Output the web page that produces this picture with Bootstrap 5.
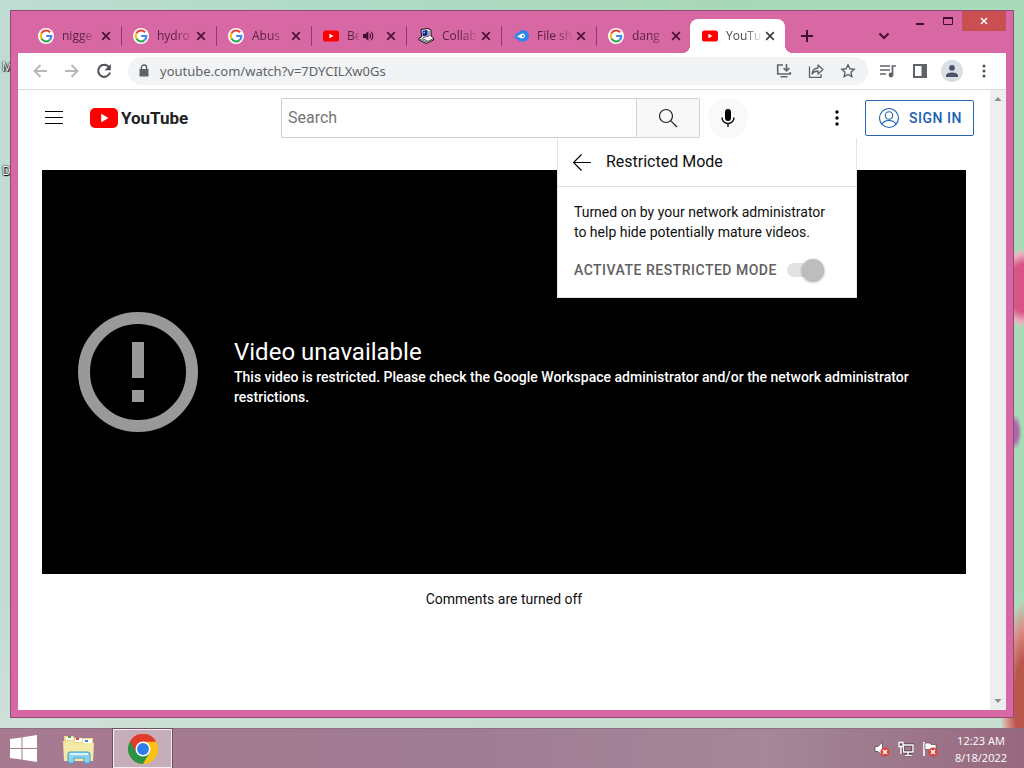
<!DOCTYPE html>
<html lang="en">
<head>
<meta charset="utf-8">
<meta name="viewport" content="width=device-width, initial-scale=1">
<title>YouTube</title>
<link href="https://cdn.jsdelivr.net/npm/bootstrap@5.3.0/dist/css/bootstrap.min.css" rel="stylesheet">
<style>
  body { font-family: Roboto, "Liberation Sans", sans-serif; font-size: 14px; line-height: 20px; color: #0f0f0f; }
  svg { display: block; flex: none; }
  button { border: 0; background: none; padding: 0; color: inherit; }

  /* desktop */
  .desktop {
    padding: 10px;
    background:
      radial-gradient(ellipse 26px 40px at 100% 288px, #d95586 60%, #e9b0c0 85%, transparent),
      radial-gradient(ellipse 8px 18px at 1014px 432px, #a86aa8 50%, transparent),
      radial-gradient(ellipse 24px 100px at 100% 700px, #b9574c 40%, #d98c86 70%, transparent),
      linear-gradient(0deg, rgba(214, 226, 220, .7), rgba(214, 226, 220, 0) 140px),
      linear-gradient(90deg, #bfdcd2 0, #b0dac8 30%, #a9d8b8 70%, #a9dbb9 100%);
  }
  .desktop-label { position: absolute; left: 2px; font: 12px "Open Sans", sans-serif; color: #fff; text-shadow: 0 0 1px #000, 0 0 2px #000, 1px 1px 1px #000; }
  .window { position: relative; background: #d868a3; border: 1px solid #8f4a78; padding: 0 7px 7px; min-height: 0; }

  /* tab strip */
  .tabstrip { height: 42px; padding-left: 8px; font: 12px/16px "Open Sans", sans-serif; color: #5a2149; }
  .tab { position: relative; width: 95px; height: 34px; padding: 0 10px 0 12px; }
  .tab + .tab:not(.active)::before { content: ""; position: absolute; left: 0; top: 7px; height: 20px; border-left: 1px solid #8a3a6c; }
  .tab.active { background: #fff; border-radius: 8px 8px 0 0; color: #45474a; margin-left: -1px; }
  .tab.active::before, .tab.active::after { content: ""; position: absolute; bottom: 0; width: 8px; height: 8px; }
  .tab.active::before { left: -8px; background: radial-gradient(circle at 0 0, transparent 8px, #fff 8px); }
  .tab.active::after { right: -8px; background: radial-gradient(circle at 100% 0, transparent 8px, #fff 8px); }
  .tab-text { flex: 1 1 0; min-width: 0; white-space: nowrap; margin: 0 2px 0 8px; -webkit-mask-image: linear-gradient(90deg, #000 50%, transparent); mask-image: linear-gradient(90deg, #000 50%, transparent); }
  .tab-close { color: #4a1238; }
  .active .tab-close { color: #3c4043; }
  .strip-btn { width: 28px; height: 34px; color: #3f1032; }
  .win-btn { width: 28px; height: 20px; color: #3f1032; }
  .win-close { width: 44px; background: #c94f50; color: #fff; }

  /* toolbar */
  .toolbar { height: 37px; background: #fff; border-bottom: 1px solid #dadce0; padding: 0 6px; color: #5f6368; }
  .tool-btn { width: 32px; height: 32px; }
  .omnibox { height: 28px; margin-left: 8px; border-radius: 14px; background: #f1f3f4; padding: 0 4px 0 8px; min-width: 0; }
  .url-input { font: 13px/20px "Noto Sans", sans-serif; color: #5f6368; border: 0; background: none; outline: 0; min-width: 0; padding: 0; }
  .avatar { width: 22px; height: 22px; border-radius: 50%; background: #dadfe6; color: #4a5568; }

  /* page */
  .viewport { background: #fff; min-height: 0; }
  .scrollbar-y { width: 17px; background: #ecefee; padding: 6px 0; color: #8c8f92; }
  .masthead { height: 56px; padding: 0 16px 0 24px; }
  .wordmark { font: bold 17px/24px Roboto, sans-serif; color: #212121; }
  .brand-link { width: 90px; margin-left: 24px; gap: 3px; }
  .search { width: 419px; margin-left: 101px; height: 40px; }
  .search-box { border: 1px solid #ccc; border-right: 0; border-radius: 2px 0 0 2px; padding: 0 6px; font: 16px/24px Roboto, sans-serif; outline: 0; min-width: 0; }
  .search-box::placeholder { color: #757575; opacity: 1; }
  .search-btn { width: 64px; border: 1px solid #d3d3d3; border-radius: 0 2px 2px 0; background: #f8f8f8; }
  .round-btn { width: 40px; height: 40px; border-radius: 50%; }
  .mic-btn { background: #f9f9f9; margin-left: 8px; }
  .sign-in { border: 1px solid #2a66b0; border-radius: 2px; color: #1a5fb4; height: 36px; width: 109px; margin-left: 8px; padding: 0; font-size: 14px; font-weight: 500; letter-spacing: .5px; gap: 8px; white-space: nowrap; }
  .popup { position: absolute; top: 100%; right: 0; width: 300px; background: #fff; border: 1px solid #e5e5e5; border-top: 0; z-index: 5; height: 160px; }
  .popup-head { height: 49px; padding: 0 15px; gap: 15px; border-bottom: 1px solid #e0e0e0; font-size: 16px; }
  .popup-body { padding: 15px 16px; }
  .popup-note { margin-bottom: 18px; }
  .mode-label { font-weight: 500; color: #606060; letter-spacing: .5px; white-space: nowrap; }
  .mode-switch { appearance: none; position: relative; width: 36px; height: 14px; border-radius: 7px; background: #e2e2e2; margin: 0 0 0 10px; }
  .mode-switch::before { content: ""; position: absolute; right: -1px; top: -4px; width: 22px; height: 22px; border-radius: 50%; background: #bdbdbd; box-shadow: 0 1px 3px rgba(0,0,0,.4); }
  .player { margin: 24px 24px 0; height: 404px; background: #000; color: #fff; padding: 0 36px; gap: 36px; }
  .player-title { font-size: 24px; line-height: 30px; font-weight: 400; }
  .player-note { font-weight: 500; }
  .comments { margin: 15px 24px 0; }

  /* taskbar */
  .taskbar { height: 40px; border-top: 1px solid #8d7083; background: linear-gradient(90deg, #a77a90, #a07c93 45%, #a48799 75%, #97687e); padding: 0 14px 0 10px; }
  .task-active { width: 59px; height: 39px; border: 1px solid #f4edf1; background: #c6adb9; margin-left: 16px; outline: 1px solid #6d5060; }
  .clock { font: 11px/17px "Open Sans", sans-serif; color: #fff; width: 58px; margin-left: 14px; }
</style>
</head>
<body class="vh-100 d-flex flex-column overflow-hidden">

<svg width="0" height="0" class="position-absolute" aria-hidden="true">
  <symbol id="g" viewBox="0 0 16 16"><circle cx="8" cy="8" r="8" fill="#fff"/><g fill="none" stroke-width="2.1"><path d="M12.1 4.2A5.3 5.3 0 0 0 3.4 5.4" stroke="#ea4335"/><path d="M3.4 5.4a5.3 5.3 0 0 0 0 5.2" stroke="#fbbc05"/><path d="M3.4 10.6a5.3 5.3 0 0 0 8.2 1.5" stroke="#34a853"/><path d="M11.6 12.1A5.3 5.3 0 0 0 13.3 8H8.2" stroke="#4285f4"/></g></symbol>
  <symbol id="yt" viewBox="0 0 16 16"><rect y="2.5" width="16" height="11" rx="2.6" fill="#f00"/><path d="M6.4 5.7v4.6L10.5 8z" fill="#fff"/></symbol>
  <symbol id="x" viewBox="0 0 10 10"><path d="M1.2 1.2l7.6 7.6M8.8 1.2L1.2 8.800" stroke="currentColor" stroke-width="1.700"/></symbol>
</svg>

<main class="desktop flex-grow-1 position-relative d-flex flex-column">
  <span class="desktop-label" style="top:58px">M</span>
  <span class="desktop-label" style="top:162px">D</span>

  <div class="window flex-grow-1 d-flex flex-column">
    <div class="tabstrip d-flex align-items-end">
      <div class="tab d-flex align-items-center"><svg width="16" height="16"><use href="#g"/></svg><span class="tab-text">nigge</span><button class="tab-close" aria-label="Close tab"><svg width="10" height="10"><use href="#x"/></svg></button></div>
      <div class="tab d-flex align-items-center"><svg width="16" height="16"><use href="#g"/></svg><span class="tab-text">hydro</span><button class="tab-close" aria-label="Close tab"><svg width="10" height="10"><use href="#x"/></svg></button></div>
      <div class="tab d-flex align-items-center"><svg width="16" height="16"><use href="#g"/></svg><span class="tab-text">Abus</span><button class="tab-close" aria-label="Close tab"><svg width="10" height="10"><use href="#x"/></svg></button></div>
      <div class="tab d-flex align-items-center"><svg width="16" height="16"><use href="#yt"/></svg><span class="tab-text">Be</span>
        <svg width="12" height="12" viewBox="0 0 12 12" class="me-2"><path d="M1 4v4h2.300L6.400 11V1L3.300 4z" fill="#3f1032"/><path d="M7.700 3.800q1.600 2.200 0 4.400M9.300 2q3 4 0 8" fill="none" stroke="#3f1032" stroke-width="1.100"/></svg>
        <button class="tab-close ms-1" aria-label="Close tab"><svg width="10" height="10"><use href="#x"/></svg></button></div>
      <div class="tab d-flex align-items-center">
        <svg width="16" height="16" viewBox="0 0 16 16"><path d="M3 1.500L10 .5l3 1.500v6l2.500 2v2L8 15.500 1 12v-2l2.500-1z" fill="#f4f4f6" stroke="#111" stroke-width="1"/><path d="M4.500 2.800L9.500 2v5.500l-5 .7z" fill="#12228c"/><path d="M5.500 3.800h1.500v1.500H5.500z" fill="#9fd0ff"/><path d="M11 3v5l-6 1.500M2 11l6 3 7-3M4 10.500l5 2.200" stroke="#333" stroke-width=".8" fill="none"/></svg>
        <span class="tab-text">Collab</span><button class="tab-close" aria-label="Close tab"><svg width="10" height="10"><use href="#x"/></svg></button></div>
      <div class="tab d-flex align-items-center">
        <svg width="16" height="16" viewBox="0 0 16 16"><path d="M0 9l3-1-1-2 4-2q3-3 6.500-1.500Q16 4 16 8q0 5-5 5.500Q6 14 3.500 11z" fill="#2f86ec"/><path d="M4 8.500L8 6q3-1.300 4 1.500 0 3-4 2.800z" fill="#fff"/><circle cx="10" cy="8" r="1" fill="#2f86ec"/></svg>
        <span class="tab-text">File sh</span><button class="tab-close" aria-label="Close tab"><svg width="10" height="10"><use href="#x"/></svg></button></div>
      <div class="tab d-flex align-items-center"><svg width="16" height="16"><use href="#g"/></svg><span class="tab-text">dang</span><button class="tab-close" aria-label="Close tab"><svg width="10" height="10"><use href="#x"/></svg></button></div>
      <div class="tab active d-flex align-items-center"><svg width="16" height="16"><use href="#yt"/></svg><span class="tab-text">YouTu</span><button class="tab-close" aria-label="Close tab"><svg width="10" height="10"><use href="#x"/></svg></button></div>
      <button class="strip-btn ms-2 d-flex align-items-center justify-content-center" aria-label="New tab"><svg width="12" height="12"><path d="M6 0v12M0 6h12" stroke="currentColor" stroke-width="2"/></svg></button>
      <button class="strip-btn ms-auto me-2 d-flex align-items-center justify-content-center" aria-label="Search tabs"><svg width="12" height="8"><path d="M1.500 1.500L6 6l4.500-4.500" fill="none" stroke="currentColor" stroke-width="2"/></svg></button>
      <div class="d-flex align-self-start">
        <button class="win-btn d-flex align-items-center justify-content-center" aria-label="Minimize"><svg width="10" height="10"><path d="M1 8h8" stroke="currentColor" stroke-width="2"/></svg></button>
        <button class="win-btn d-flex align-items-center justify-content-center" aria-label="Maximize"><svg width="10" height="10"><path d="M.5 1.500h9v7h-9z" fill="none" stroke="currentColor"/><path d="M0 2h10" stroke="currentColor" stroke-width="2"/></svg></button>
        <button class="win-btn win-close d-flex align-items-center justify-content-center" aria-label="Close"><svg width="8" height="8" viewBox="0 0 10 10"><use href="#x"/></svg></button>
      </div>
    </div>

    <div class="toolbar d-flex align-items-center">
      <button class="tool-btn d-flex align-items-center justify-content-center" aria-label="Back"><svg width="14" height="14"><path d="M14 7H1.500M7.500 1L1.500 7l6 6" fill="none" stroke="#b4b6b9" stroke-width="1.800"/></svg></button>
      <button class="tool-btn d-flex align-items-center justify-content-center" aria-label="Forward"><svg width="14" height="14"><path d="M0 7h12.500M6.500 1l6 6-6 6" fill="none" stroke="#b4b6b9" stroke-width="1.800"/></svg></button>
      <button class="tool-btn d-flex align-items-center justify-content-center" aria-label="Reload"><svg width="16" height="16"><path d="M13 4.200A6 6 0 1 0 14 9.500" fill="none" stroke="#4d5156" stroke-width="2"/><path d="M14.800 1v6.200H8.600z" fill="#4d5156"/></svg></button>
      <div class="omnibox flex-grow-1 d-flex align-items-center">
        <svg width="16" height="16"><path d="M3.500 6h9v7.500h-9z" fill="#5f6368"/><path d="M5.400 6.500V4.600a2.600 2.600 0 0 1 5.200 0v1.900" fill="none" stroke="#5f6368" stroke-width="1.400"/></svg>
        <input class="url-input flex-grow-1 ms-2" type="text" aria-label="Address" value="youtube.com/watch?v=7DYCILXw0Gs">
        <button class="tool-btn d-flex align-items-center justify-content-center" aria-label="Install"><svg width="16" height="16"><path d="M7 2H1.700v9h12.600V9M4.500 13.800h7M10.500 1v6.500M7.600 5l2.900 2.900L13.400 5" fill="none" stroke="currentColor" stroke-width="1.600"/></svg></button>
        <button class="tool-btn d-flex align-items-center justify-content-center" aria-label="Share"><svg width="16" height="16"><path d="M1.500 3.500v10.800H13V11" fill="none" stroke="currentColor" stroke-width="1.300"/><path d="M4 11q.5-5.500 6-6V2l5 4.500-5 4.500V8Q6 8 4 11z" fill="none" stroke="currentColor" stroke-width="1.300" stroke-linejoin="round"/></svg></button>
        <button class="tool-btn d-flex align-items-center justify-content-center" aria-label="Bookmark"><svg width="16" height="16"><path d="M8 1.800l1.900 4 4.300.5-3.200 3 .9 4.400L8 11.500l-3.900 2.200.9-4.400-3.200-3 4.300-.5z" fill="none" stroke="currentColor" stroke-width="1.400"/></svg></button>
      </div>
      <button class="tool-btn ms-1 d-flex align-items-center justify-content-center" aria-label="Media"><svg width="16" height="14"><path d="M0 2h10M0 6h10M0 10h6M12.500 11V2H16" fill="none" stroke="currentColor" stroke-width="1.700"/><circle cx="11" cy="11" r="2.400" fill="currentColor"/></svg></button>
      <button class="tool-btn d-flex align-items-center justify-content-center" aria-label="Side panel"><svg width="14" height="14"><path d="M1 1h12v12H1z" fill="none" stroke="currentColor" stroke-width="2"/><path d="M8.500 1H13v12H8.500z" fill="currentColor"/></svg></button>
      <button class="tool-btn d-flex align-items-center justify-content-center" aria-label="Profile"><span class="avatar d-flex align-items-center justify-content-center"><svg width="14" height="14"><circle cx="7" cy="3.800" r="2.900" fill="currentColor"/><path d="M1 13v-1.500Q1.500 8.500 7 8.500t6 3V13z" fill="currentColor"/></svg></span></button>
      <button class="tool-btn d-flex align-items-center justify-content-center" aria-label="Chrome menu"><svg width="4" height="14" fill="#4d5156"><circle cx="2" cy="2" r="1.500"/><circle cx="2" cy="7" r="1.500"/><circle cx="2" cy="12" r="1.500"/></svg></button>
    </div>

    <div class="viewport flex-grow-1 d-flex">
      <div class="flex-grow-1">
        <header class="masthead d-flex align-items-center">
          <button aria-label="Guide"><svg width="24" height="24"><path d="M3 5.500h18M3 11.500h18M3 17.500h18" stroke="#030303"/></svg></button>
          <a href="#" class="brand-link d-flex align-items-center text-decoration-none" aria-label="YouTube home">
            <svg width="28" height="20"><rect width="28" height="20" rx="5" fill="#f00"/><path d="M11.200 5.700v8.600l7.300-4.300z" fill="#fff"/></svg>
            <span class="wordmark">YouTube</span>
          </a>
          <form class="search d-flex">
            <input class="search-box flex-grow-1" type="text" placeholder="Search" aria-label="Search">
            <button class="search-btn d-flex align-items-center justify-content-center" type="button" aria-label="Search"><svg width="20" height="20" fill="none" stroke="#222" stroke-width="1.200"><circle cx="8" cy="8" r="6.500"/><path d="M12.700 12.700L19 19"/></svg></button>
          </form>
          <button class="round-btn mic-btn d-flex align-items-center justify-content-center" aria-label="Search with your voice"><svg width="24" height="24"><rect x="9" y="3" width="6" height="12" rx="3" fill="#030303"/><path d="M6 11.500a6 6 0 0 0 12 0M12 17.500V21" fill="none" stroke="#030303" stroke-width="1.400"/></svg></button>
          <div class="position-relative ms-auto">
            <button class="round-btn d-flex align-items-center justify-content-center" aria-label="Settings"><svg width="4" height="16" fill="#030303"><circle cx="2" cy="2" r="1.700"/><circle cx="2" cy="8" r="1.700"/><circle cx="2" cy="14" r="1.700"/></svg></button>
            <section class="popup">
              <div class="popup-head d-flex align-items-center"><button aria-label="Back"><svg width="18" height="18"><path d="M18 9.500H1M8.500 1.500l-8 8 8 8" fill="none" stroke="#030303" stroke-width="1.200"/></svg></button><span>Restricted Mode</span></div>
              <div class="popup-body">
                <p class="popup-note">Turned on by your network administrator<br>to help hide potentially mature videos.</p>
                <div class="d-flex align-items-center"><label class="mode-label" for="mode">ACTIVATE RESTRICTED MODE</label><input id="mode" type="checkbox" role="switch" class="mode-switch" checked disabled></div>
              </div>
            </section>
          </div>
          <button class="btn sign-in d-flex align-items-center justify-content-center"><svg width="24" height="24" fill="none" stroke="currentColor" stroke-width="1.100"><circle cx="12" cy="12" r="9.500"/><circle cx="12" cy="9.500" r="3.700"/><path d="M5 18.500q1.500-4 7-4t7 4"/></svg>SIGN IN</button>
        </header>

        <section class="player d-flex align-items-center">
          <svg width="120" height="120" fill="#999"><circle cx="60" cy="60" r="54" fill="none" stroke="#999" stroke-width="12"/><path d="M54 30h12v36H54zM54 78h12v12H54z"/></svg>
          <div>
            <h1 class="player-title mb-0">Video unavailable</h1>
            <p class="player-note mb-0">This video is restricted. Please check the Google Workspace administrator and/or the network administrator restrictions.</p>
          </div>
        </section>
        <p class="comments mb-0 text-center">Comments are turned off</p>
      </div>
      <div class="scrollbar-y d-flex flex-column align-items-center justify-content-between">
        <svg width="8" height="6"><path d="M4 1l3.500 4h-7z" fill="currentColor"/></svg>
        <svg width="8" height="6"><path d="M.5 1h7L4 5z" fill="currentColor"/></svg>
      </div>
    </div>
  </div>
</main>

<footer class="taskbar d-flex align-items-center">
  <button aria-label="Start"><svg width="27" height="27" fill="#fff"><path d="M0 4l11.500-1.600v10.600H0zM12.500 2.200L27 0v13H12.500zM0 14h11.500v10.600L0 23zM12.500 14H27v13l-14.500-2.200z"/></svg></button>
  <button class="ms-4" aria-label="File Explorer"><svg width="36" height="30"><path d="M3 2h9l2 2h18v22H3z" fill="#ecd98a"/><path d="M5 3h7v3H5z" fill="#fff"/><path d="M7 2h3v2H7z" fill="#4a9b47"/><path d="M14 4h7v4h-7z" fill="#fff"/><path d="M15 4h3v2h-3z" fill="#d3472f"/><path d="M22 5h9v4h-9z" fill="#fff"/><path d="M24 6h3v2h-3z" fill="#3a7fd0"/><path d="M2 7h10l2 2h19l-1 18H3z" fill="#f5e9a6"/><path d="M7 29V20q0-2 2-2h18q2 0 2 2v9h-6v-5H13v5z" fill="#8fd2ee" stroke="#3fa0cf"/><path d="M9 20h18" stroke="#d8f3fc" stroke-width="2"/></svg></button>
  <button class="task-active d-flex align-items-center justify-content-center" aria-label="Google Chrome">
    <svg width="30" height="30" viewBox="0 0 48 48"><circle cx="24" cy="24" r="24" fill="#fbc116"/><path d="M24 24L3.200 12A24 24 0 0 1 44.800 12z" fill="#e33b2e"/><path d="M24 12h20.800A24 24 0 0 1 24 48l10.400-18z" fill="#fbc116"/><path d="M3.200 12A24 24 0 0 0 24 48l10.400-18L24 24z" fill="#2b9246"/><path d="M3.200 12L13.600 30 24 12h20.800A24 24 0 0 0 3.200 12z" fill="#e33b2e"/><circle cx="24" cy="24" r="12" fill="#fff"/><circle cx="24" cy="24" r="9.500" fill="#2f7de9"/></svg>
  </button>
  <div class="ms-auto d-flex align-items-center gap-2">
    <svg width="16" height="16"><path d="M1 5.500v5h3L8.500 15V1L4 5.500z" fill="#fff" stroke="#4d3442" stroke-width=".7"/><circle cx="11" cy="11" r="4.600" fill="#d9443c"/><path d="M9 9l4 4M13 9l-4 4" stroke="#fff" stroke-width="1.500"/></svg>
    <svg width="16" height="16"><path d="M5.500 4h9.500v7H5.500zM10 11v3M7 14.500h7" fill="none" stroke="#4d3442" stroke-width="3"/><path d="M5.500 4h9.500v7H5.500zM10 11v3M7 14.500h7" fill="none" stroke="#fff" stroke-width="1.400"/><path d="M1 1.500h4v4H1zM3 5.500V13" fill="#6a4b5b" stroke="#fff" stroke-width="1.300"/></svg>
    <svg width="16" height="16"><path d="M2 1v14" stroke="#fff" stroke-width="1.600"/><path d="M3 2h5l1 1.500h5V10H8L7 8.500H3z" fill="#fff" stroke="#4d3442" stroke-width=".6"/><circle cx="11" cy="11" r="4.600" fill="#d9443c"/><path d="M9 9l4 4M13 9l-4 4" stroke="#fff" stroke-width="1.500"/></svg>
  </div>
  <div class="clock text-center">12:23 AM<br>8/18/2022</div>
</footer>

<script src="https://cdn.jsdelivr.net/npm/bootstrap@5.3.0/dist/js/bootstrap.bundle.min.js"></script>
</body>
</html>
